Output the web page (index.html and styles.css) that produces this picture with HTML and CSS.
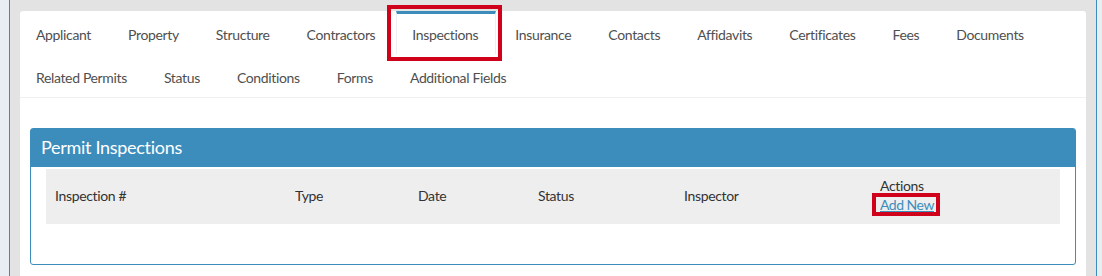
FILE: index.html
```html
<!DOCTYPE html>
<html lang="en">
<head>
    <meta charset="UTF-8">
    <title>Permit Inspections</title>
    <link rel="stylesheet" href="styles.css">
</head>
<body>

    <div class="content-wrapper">
        <div class="tab-card">

            <!-- Permit tabs -->
            <ul class="nav-tabs">
                <li><a href="#">Applicant</a></li>
                <li><a href="#">Property</a></li>
                <li><a href="#">Structure</a></li>
                <li><a href="#">Contractors</a></li>
                <li class="active highlight"><a href="#">Inspections</a></li>
                <li><a href="#">Insurance</a></li>
                <li><a href="#">Contacts</a></li>
                <li><a href="#">Affidavits</a></li>
                <li><a href="#">Certificates</a></li>
                <li><a href="#">Fees</a></li>
                <li><a href="#">Documents</a></li>
                <li><a href="#">Related Permits</a></li>
                <li><a href="#">Status</a></li>
                <li><a href="#">Conditions</a></li>
                <li><a href="#">Forms</a></li>
                <li><a href="#">Additional Fields</a></li>
            </ul>

            <!-- Inspections panel -->
            <div class="panel">
                <div class="panel-heading">Permit Inspections</div>
                <div class="panel-body">
                    <table class="grid">
                        <colgroup>
                            <col class="col-num">
                            <col class="col-type">
                            <col class="col-date">
                            <col class="col-status">
                            <col class="col-inspector">
                            <col>
                        </colgroup>
                        <thead>
                            <tr>
                                <th>Inspection #</th>
                                <th>Type</th>
                                <th>Date</th>
                                <th>Status</th>
                                <th>Inspector</th>
                                <th>Actions<br><a href="#" class="add-new">Add New</a></th>
                            </tr>
                        </thead>
                        <tbody></tbody>
                    </table>
                </div>
            </div>

        </div>
    </div>

</body>
</html>
```

FILE: styles.css
```css
body {
    font-family: Lato, "Open Sans", sans-serif;
    font-size: 14px;
    letter-spacing: -0.35px;
    color: #333;
    background-color: #e9eef4;
    margin: 0;
    padding: 0;
    height: 276px;
    overflow: hidden;
}
a {
    text-decoration: none;
}
.content-wrapper {
    margin-left: 9px;
    width: 1088px;
    min-height: 300px;
    background-color: #e3e3e3;
    border-left: 1px solid #3c8dbc;
    border-right: 1px solid #3c8dbc;
    padding: 11px 10px 0 10px;
    box-sizing: border-box;
}
.tab-card {
    background-color: #fff;
    border-radius: 3px 3px 0 0;
    min-height: 300px;
}

/* tabs */
.nav-tabs {
    list-style: none;
    margin: 0;
    padding: 0;
    display: flex;
    flex-wrap: wrap;
    border-bottom: 1px solid #f0f0f0;
}
.nav-tabs li {
    position: relative;
    margin-right: 3px;
}
.nav-tabs li a {
    display: block;
    line-height: 20px;
    padding: 11px 17px 9px 15px;
    border: 1px solid transparent;
    border-top: 3px solid transparent;
    border-bottom: 0;
    color: #4f4f4f;
}
.nav-tabs li.active a {
    border-color: #eee;
    border-top-color: #3c8dbc;
}
.highlight::after {
    content: "";
    position: absolute;
    left: -9px;
    right: -6px;
    top: -6px;
    bottom: -7px;
    border: 4px solid #d0021b;
}

/* panel */
.panel {
    margin: 30px 10px 0 10px;
    border: 1px solid #3c8dbc;
    border-radius: 3px;
    height: 137px;
    box-sizing: border-box;
}
.panel-heading {
    background-color: #3c8dbc;
    color: #fff;
    font-size: 18px;
    letter-spacing: -0.3px;
    line-height: 20px;
    padding: 8px 10px 10px 10px;
}
.panel-body {
    padding: 2px 15px 0 15px;
}
.grid {
    width: 100%;
    border-collapse: collapse;
    table-layout: fixed;
}
.grid th {
    background-color: #eee;
    font-weight: normal;
    text-align: left;
    line-height: 19px;
    padding: 7px 9px 10px 9px;
    vertical-align: middle;
}
.col-num { width: 240px; }
.col-type { width: 123px; }
.col-date { width: 120px; }
.col-status { width: 146px; }
.col-inspector { width: 196px; }
.add-new {
    position: relative;
    color: #3c8dbc;
    letter-spacing: -0.5px;
    text-decoration: underline;
}
.add-new::after {
    content: "";
    position: absolute;
    left: -8px;
    right: -6px;
    top: -3px;
    bottom: -3px;
    border: 4px solid #d0021b;
}
```
